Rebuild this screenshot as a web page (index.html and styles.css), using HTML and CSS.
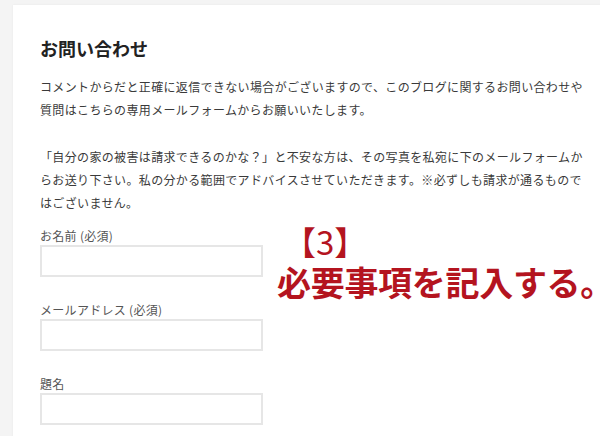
FILE: index.html
```html
<!DOCTYPE html>
<html lang="ja">
<head>
    <meta charset="UTF-8">
    <meta name="viewport" content="width=device-width, initial-scale=1.0">
    <title>お問い合わせ</title>
    <link rel="stylesheet" href="styles.css">
</head>
<body>
    <div class="page">
        <div class="card">
            <h1>お問い合わせ</h1>
            <p>コメントからだと正確に返信できない場合がございますので、このブログに関するお問い合わせや質問はこちらの専用メールフォームからお願いいたします。</p>
            <p>「自分の家の被害は請求できるのかな？」と不安な方は、その写真を私宛に下のメールフォームからお送り下さい。私の分かる範囲でアドバイスさせていただきます。※必ずしも請求が通るものではございません。</p>
            <form class="contact">
                <div class="field">
                    <label for="name">お名前 (必須)</label>
                    <input type="text" id="name">
                </div>
                <div class="field">
                    <label for="mail">メールアドレス (必須)</label>
                    <input type="text" id="mail">
                </div>
                <div class="field">
                    <label for="subject">題名</label>
                    <input type="text" id="subject">
                </div>
            </form>
            <div class="note">
                <div class="note-num">【3】</div>
                <div class="note-text">必要事項を記入する。</div>
            </div>
        </div>
    </div>
</body>
</html>
```

FILE: styles.css
```css
html, body {
    margin: 0;
    padding: 0;
    height: 100%;
    overflow: hidden;
}
body {
    font-family: 'Noto Sans CJK JP', 'Noto Sans', sans-serif;
    background-color: #f4f4f4;
    color: #3a3a3a;
}
.page {
    padding: 5px 0 0 13px;
}
.card {
    position: relative;
    background: #fff;
    width: 600px;
    min-height: 440px;
    padding: 31px 0 0 27px;
    box-sizing: border-box;
    box-shadow: 0 0 2px rgba(0, 0, 0, 0.06);
}
h1 {
    font-size: 18px;
    font-weight: bold;
    line-height: 25px;
    margin: 0 0 14px;
    color: #222;
}
p {
    width: 550px;
    font-size: 12px;
    line-height: 23px;
    letter-spacing: 0.35px;
    margin: 0;
}
p + p {
    margin-top: 24px;
}
.contact {
    margin-top: 13px;
}
.field {
    margin-bottom: 24px;
}
.field label {
    display: block;
    font-size: 12px;
    line-height: 18px;
    letter-spacing: 0.3px;
    color: #555;
}
.field input {
    display: block;
    width: 223px;
    height: 32px;
    box-sizing: border-box;
    border: 2px solid #e6e6e6;
    background: #fff;
    margin: 0;
    padding: 0;
}
.note {
    position: absolute;
    left: 264px;
    top: 218px;
    color: #b4141f;
    font-weight: bold;
    white-space: nowrap;
}
.note-num {
    font-size: 33px;
    line-height: 36px;
    font-weight: normal;
    padding-left: 6px;
}
.note-text {
    font-size: 34px;
    line-height: 46px;
    letter-spacing: -0.3px;
}
```
